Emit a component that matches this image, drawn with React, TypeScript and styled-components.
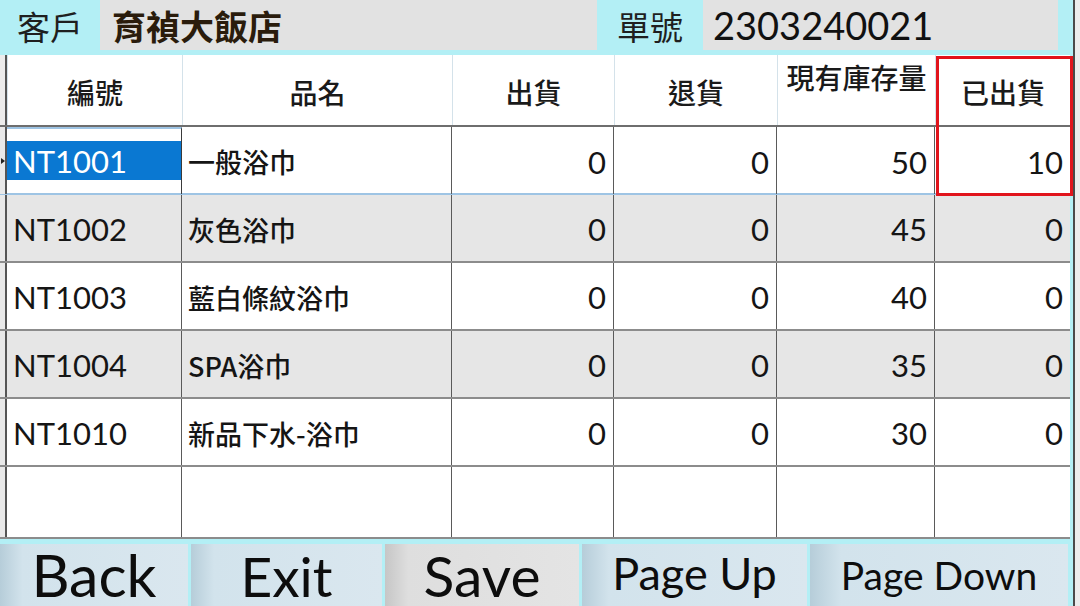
import styled, { createGlobalStyle } from 'styled-components';

const GlobalStyle = createGlobalStyle`
  html, body {
    margin: 0;
    padding: 0;
    background: #ececec;
  }
  body {
    font-family: Lato, "Noto Sans CJK TC", sans-serif;
  }
`;

const Window = styled.div`
  position: relative;
  width: 1073px;
  height: 606px;
  background: #b3eff5;
  border-right: 2px solid #4a4a4a;
  display: flex;
  flex-direction: column;
  overflow: hidden;
`;

const TopBar = styled.div`
  display: flex;
  height: 55px;
  padding-bottom: 5px;
  box-sizing: border-box;
  padding-right: 15px;
`;

const Label = styled.div<{ $width: number }>`
  width: ${p => p.$width}px;
  display: flex;
  align-items: center;
  justify-content: center;
  font-family: "Noto Sans CJK TC", sans-serif;
  font-size: 33px;
  color: #1f1f1f;
  padding-top: 2px;
`;

const Field = styled.div<{ $width?: number }>`
  ${p => (p.$width ? `width: ${p.$width}px;` : 'flex: 1;')}
  background: #e2e2e2;
  display: flex;
  align-items: center;
  padding-left: 10px;
  box-sizing: border-box;
  font-size: 38px;
  color: #111;
  font-family: Lato, "Noto Sans CJK TC", sans-serif;
`;

const ClientName = styled.span`
  font-family: "Noto Sans CJK TC", sans-serif;
  font-size: 34px;
  font-weight: 700;
  color: #2a1c0c;
  padding-left: 2px;
`;

const Grid = styled.div`
  display: flex;
  flex-direction: column;
  width: 1070px;
  background: #fff;
`;

const COLS = '7px 175px 270px 162px 163px 158px 135px';

const HeaderRow = styled.div`
  display: grid;
  grid-template-columns: ${COLS};
  height: 72px;
  border-bottom: 2px solid #6e6e6e;
  box-sizing: border-box;
`;

const HeadCell = styled.div<{ $top?: boolean }>`
  display: flex;
  justify-content: center;
  align-items: ${p => (p.$top ? 'flex-start' : 'center')};
  padding-top: ${p => (p.$top ? '2px' : '4px')};
  border-left: 1px solid #d4e2ea;
  font-family: "Noto Sans CJK TC", sans-serif;
  font-size: 28px;
  font-weight: 500;
  color: #1a1a1a;
  background: #fff;
  white-space: nowrap;
`;

const RowHead = styled.div<{ $bg?: string }>`
  background: ${p => p.$bg || '#e9e9e9'};
  border-right: 2px solid #555;
  position: relative;
`;

const Row = styled.div<{ $alt: boolean; $blueLine?: boolean; $h?: number }>`
  display: grid;
  grid-template-columns: ${COLS};
  height: ${p => p.$h || 68}px;
  box-sizing: border-box;
  background: ${p => (p.$alt ? '#e6e6e6' : '#fff')};
  border-bottom: 2px solid ${p => (p.$blueLine ? '#9ec4e4' : '#8c8c8c')};
`;

const Cell = styled.div<{ $right?: boolean; $last?: boolean }>`
  display: flex;
  align-items: center;
  justify-content: ${p => (p.$right ? 'flex-end' : 'flex-start')};
  padding: ${p => (p.$right ? '2px 7px 0 0' : '2px 0 0 6px')};
  border-right: ${p => (p.$last ? 'none' : '1.5px solid #5a5a5a')};
  font-size: 31px;
  color: #151515;
  box-sizing: border-box;
  font-family: Lato, "Noto Sans CJK TC", sans-serif;
`;

const NameText = styled.span`
  font-family: "Noto Sans CJK TC", sans-serif;
  font-size: 27px;
  font-weight: 500;
`;

const SelectedCell = styled.div`
  display: flex;
  flex-direction: column;
  justify-content: center;
  border-right: 1.5px solid #3a3a3a;
  border-top: 2px solid #9ec4e4;
  padding: 12px 0 14px 0;
  box-sizing: border-box;
`;

const Highlight = styled.div`
  background: #0a78d2;
  color: #fff;
  height: 39px;
  display: flex;
  align-items: center;
  padding-left: 6px;
  font-size: 31px;
`;

const Pointer = styled.div`
  position: absolute;
  top: 31px;
  left: 1px;
  width: 0;
  height: 0;
  border-top: 3px solid transparent;
  border-bottom: 3px solid transparent;
  border-left: 4px solid #222;
`;

const RedBox = styled.div`
  position: absolute;
  left: 936px;
  top: 56px;
  width: 137px;
  height: 140px;
  border: 3px solid #e1141c;
  box-sizing: border-box;
  pointer-events: none;
`;

const ButtonBar = styled.div`
  display: flex;
  gap: 3px;
  padding-top: 5px;
  height: 71px;
  box-sizing: border-box;
`;

const Button = styled.div<{ $width: number; $size: number; $lift: number; $gray?: boolean }>`
  width: ${p => p.$width}px;
  height: 64px;
  box-sizing: border-box;
  border-bottom: 2px solid #3e3e3e;
  background: ${p =>
    p.$gray
      ? 'linear-gradient(to right, #c6c6c6 0%, #dedede 12%, #e4e4e4 100%)'
      : 'linear-gradient(to right, #b6cdd9 0%, #d2e3ec 12%, #dae7ef 100%)'};
  display: flex;
  align-items: flex-end;
  justify-content: center;
  font-family: Lato, sans-serif;
  font-size: ${p => p.$size}px;
  line-height: 1;
  color: #0d0d0d;
  padding-bottom: ${p => p.$lift}px;
`;

interface Item {
  code: string;
  name: string;
  out: number;
  back: number;
  stock: number;
  shipped: number;
}

const items: Item[] = [
  { code: 'NT1001', name: '一般浴巾', out: 0, back: 0, stock: 50, shipped: 10 },
  { code: 'NT1002', name: '灰色浴巾', out: 0, back: 0, stock: 45, shipped: 0 },
  { code: 'NT1003', name: '藍白條紋浴巾', out: 0, back: 0, stock: 40, shipped: 0 },
  { code: 'NT1004', name: 'SPA浴巾', out: 0, back: 0, stock: 35, shipped: 0 },
  { code: 'NT1010', name: '新品下水-浴巾', out: 0, back: 0, stock: 30, shipped: 0 },
];

const buttons = [
  { label: 'Back', width: 188, size: 59, lift: 2 },
  { label: 'Exit', width: 191, size: 55, lift: 2 },
  { label: 'Save', width: 194, size: 57, lift: 2, gray: true },
  { label: 'Page Up', width: 225, size: 45, lift: 10 },
  { label: 'Page Down', width: 258, size: 39, lift: 11 },
];

export default function App() {
  return (
    <Window>
      <GlobalStyle />
      <TopBar>
        <Label $width={100}>客戶</Label>
        <Field $width={497}>
          <ClientName>育禎大飯店</ClientName>
        </Field>
        <Label $width={106}>單號</Label>
        <Field>2303240021</Field>
      </TopBar>
      <Grid>
        <HeaderRow>
          <RowHead $bg="#ececec" />
          <HeadCell>編號</HeadCell>
          <HeadCell>品名</HeadCell>
          <HeadCell>出貨</HeadCell>
          <HeadCell>退貨</HeadCell>
          <HeadCell $top>現有庫存量</HeadCell>
          <HeadCell>已出貨</HeadCell>
        </HeaderRow>
        {items.map((it, i) => (
          <Row key={it.code} $alt={i % 2 === 1} $blueLine={i === 0}>
            <RowHead>{i === 0 && <Pointer />}</RowHead>
            {i === 0 ? (
              <SelectedCell>
                <Highlight>{it.code}</Highlight>
              </SelectedCell>
            ) : (
              <Cell>{it.code}</Cell>
            )}
            <Cell>
              <NameText>{it.name}</NameText>
            </Cell>
            <Cell $right>{it.out}</Cell>
            <Cell $right>{it.back}</Cell>
            <Cell $right>{it.stock}</Cell>
            <Cell $right $last>{it.shipped}</Cell>
          </Row>
        ))}
        <Row $alt={false} $h={72}>
          <RowHead />
          <Cell />
          <Cell />
          <Cell />
          <Cell />
          <Cell />
          <Cell $last />
        </Row>
      </Grid>
      <ButtonBar>
        {buttons.map(b => (
          <Button key={b.label} $width={b.width} $size={b.size} $lift={b.lift} $gray={b.gray}>
            {b.label}
          </Button>
        ))}
      </ButtonBar>
      <RedBox />
    </Window>
  );
}
